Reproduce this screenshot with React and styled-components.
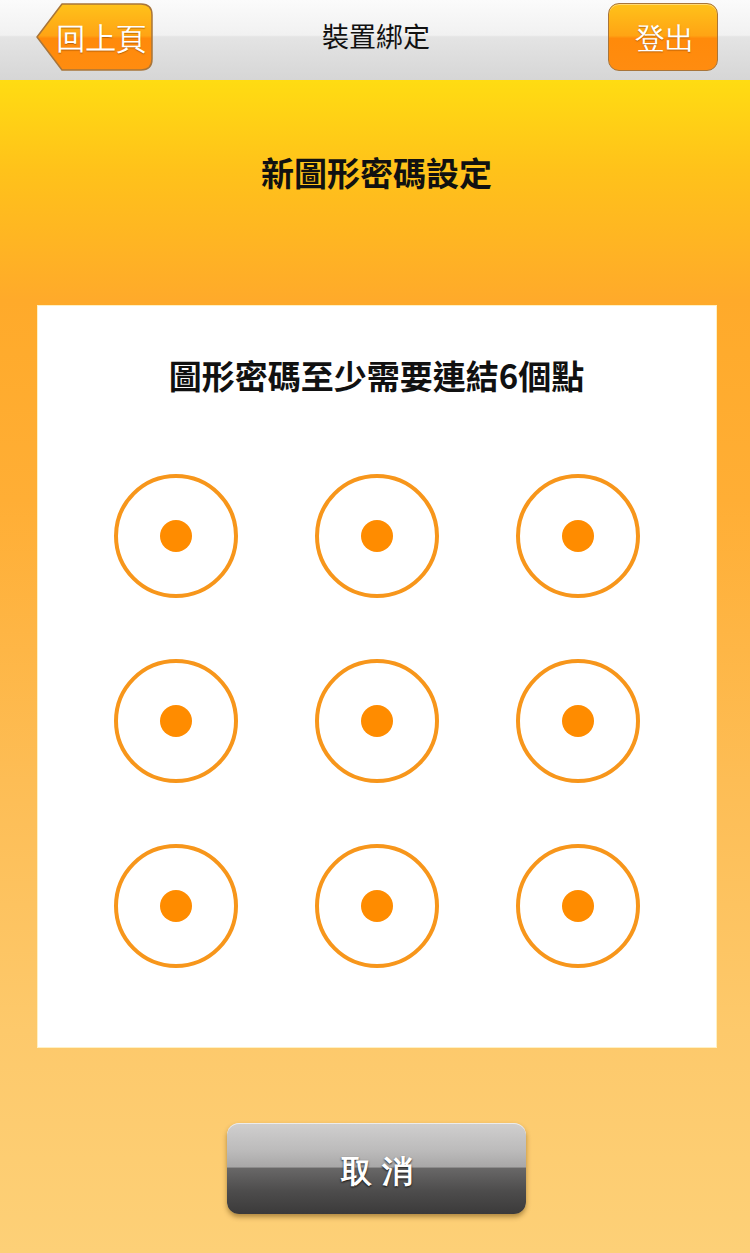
import React from "react";
import styled, { createGlobalStyle } from "styled-components";

const Global = createGlobalStyle`
  html, body { margin: 0; padding: 0; }
  body {
    width: 750px;
    min-height: 1253px;
    font-family: "Noto Sans CJK TC", "Noto Sans", sans-serif;
    background: #fdd076;
  }
`;

const Page = styled.div`
  width: 750px;
  height: 1253px;
  display: flex;
  flex-direction: column;
  overflow: hidden;
`;

const Header = styled.header`
  height: 80px;
  flex: none;
  display: flex;
  align-items: flex-start;
  justify-content: space-between;
  padding: 3px 32px 0 36px;
  box-sizing: border-box;
  position: relative;
  background: linear-gradient(
    to bottom,
    #fbfbfb 0%,
    #f1f1f1 44%,
    #e4e4e4 46%,
    #d6d6d6 100%
  );
`;

const Title = styled.h1`
  position: absolute;
  left: 0;
  right: 0;
  top: 0;
  bottom: 0;
  margin: 0;
  display: flex;
  align-items: center;
  justify-content: center;
  font-size: 27px;
  font-weight: 400;
  color: #111;
  pointer-events: none;
  padding: 0 0 10px 2px;
`;

const BackButton = styled.button`
  position: relative;
  width: 117px;
  height: 68px;
  border: none;
  background: none;
  padding: 3px 0 0 12px;
  display: flex;
  align-items: center;
  justify-content: center;
  cursor: pointer;
  z-index: 1;
`;

const ShapeSvg = styled.svg`
  position: absolute;
  left: 0;
  top: 0;
  width: 100%;
  height: 100%;
  z-index: -1;
`;

const ButtonText = styled.span`
  color: #fff;
  font-size: 30px;
  font-weight: 500;
  text-shadow: 0 1px 1px rgba(140, 70, 0, 0.6);
  line-height: 1;
`;

const LogoutButton = styled.button`
  width: 110px;
  height: 68px;
  border-radius: 11px;
  border: 1.5px solid #a8753a;
  box-sizing: border-box;
  padding: 3px 0 0 4px;
  display: flex;
  align-items: center;
  justify-content: center;
  cursor: pointer;
  z-index: 1;
  background: linear-gradient(
    to bottom,
    #ffc21a 0%,
    #ffa414 48%,
    #ff8a0a 52%,
    #ff8c10 100%
  );
  box-shadow: inset 0 1px 0 rgba(255, 255, 255, 0.4);
`;

const Body = styled.main`
  flex: 1;
  display: flex;
  flex-direction: column;
  align-items: center;
  padding-left: 3px;
  background: linear-gradient(
    to bottom,
    #ffdc12 0px,
    #ffc21a 90px,
    #ffaa2a 220px,
    #ffae35 420px,
    #fdbd55 700px,
    #fdc96b 950px,
    #fdd077 1173px
  );
`;

const Heading = styled.h2`
  margin: 72px 0 0;
  font-size: 33px;
  line-height: 40px;
  font-weight: 700;
  color: #111;
`;

const Panel = styled.section`
  margin-top: 113px;
  width: 680px;
  height: 743px;
  box-sizing: border-box;
  background: #fff;
  border: 1px solid #fff1c4;
  display: flex;
  flex-direction: column;
  align-items: center;
  padding-top: 49px;
`;

const Hint = styled.p`
  margin: 0;
  font-size: 33px;
  line-height: 40px;
  font-weight: 700;
  color: #111;
`;

const Grid = styled.div`
  margin-top: 79px;
  display: grid;
  grid-template-columns: repeat(3, 124px);
  grid-auto-rows: 124px;
  column-gap: 77px;
  row-gap: 61px;
`;

const Node = styled.div`
  width: 124px;
  height: 124px;
  box-sizing: border-box;
  border-radius: 50%;
  border: 4px solid #f7961b;
  display: flex;
  align-items: center;
  justify-content: center;
`;

const Dot = styled.div`
  width: 32px;
  height: 32px;
  border-radius: 50%;
  background: #ff8c00;
`;

const CancelButton = styled.button`
  margin-top: 75px;
  width: 299px;
  height: 91px;
  border-radius: 12px;
  border: none;
  padding: 6px 0 0;
  cursor: pointer;
  display: flex;
  align-items: center;
  justify-content: center;
  background: linear-gradient(
    to bottom,
    #d0cfcf 0%,
    #bcbbbb 30%,
    #a9a8a8 48%,
    #686767 50%,
    #4d4c4c 75%,
    #3b3a3a 100%
  );
  box-shadow: 0 3px 5px rgba(80, 50, 0, 0.45), inset 0 1px 0 rgba(255,255,255,0.6);
`;

const CancelText = styled.span`
  color: #fff;
  font-size: 31px;
  font-weight: 700;
  letter-spacing: 10px;
  margin-right: -10px;
  text-shadow: 0 1px 2px rgba(0, 0, 0, 0.85);
`;

export default function App() {
  const nodes = Array.from({ length: 9 });
  return (
    <>
      <Global />
      <Page>
        <Header>
          <BackButton>
            <ShapeSvg viewBox="0 0 117 68" preserveAspectRatio="none">
              <defs>
                <linearGradient id="bk" x1="0" y1="0" x2="0" y2="1">
                  <stop offset="0" stopColor="#ffc21a" />
                  <stop offset="0.48" stopColor="#ffa414" />
                  <stop offset="0.52" stopColor="#ff8a0a" />
                  <stop offset="1" stopColor="#ff8c10" />
                </linearGradient>
              </defs>
              <path
                d="M1 34 L26 1 H105 Q116 1 116 12 V56 Q116 67 105 67 H26 Z"
                fill="url(#bk)"
                stroke="#a8753a"
                strokeWidth="1.5"
                strokeLinejoin="round"
              />
            </ShapeSvg>
            <ButtonText>回上頁</ButtonText>
          </BackButton>
          <Title>裝置綁定</Title>
          <LogoutButton>
            <ButtonText>登出</ButtonText>
          </LogoutButton>
        </Header>
        <Body>
          <Heading>新圖形密碼設定</Heading>
          <Panel>
            <Hint>圖形密碼至少需要連結6個點</Hint>
            <Grid>
              {nodes.map((_, i) => (
                <Node key={i}>
                  <Dot />
                </Node>
              ))}
            </Grid>
          </Panel>
          <CancelButton>
            <CancelText>取消</CancelText>
          </CancelButton>
        </Body>
      </Page>
    </>
  );
}
